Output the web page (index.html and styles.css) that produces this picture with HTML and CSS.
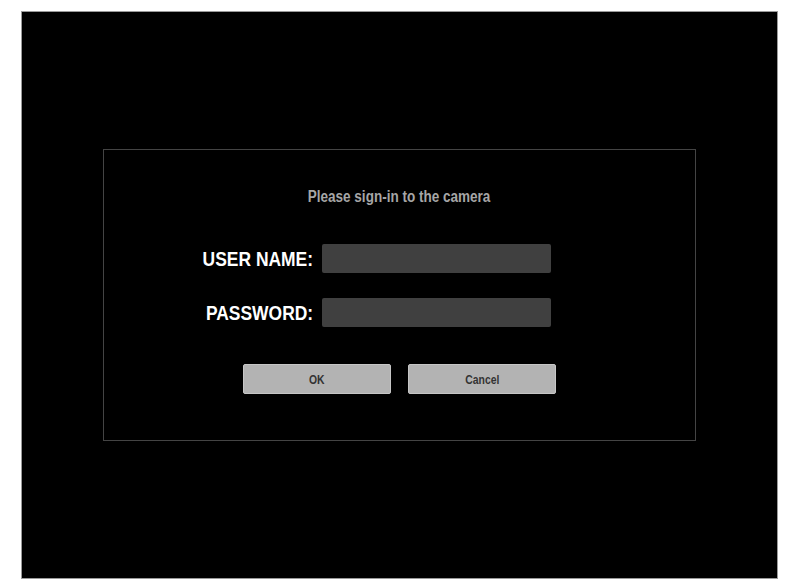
FILE: index.html
```html
<!DOCTYPE html>
<html>
<head>
<meta charset="utf-8">
<link rel="stylesheet" href="styles.css">
</head>
<body>
<div class="screen">
  <div class="panel">
    <div class="title"><span class="narrow">Please sign-in to the camera</span></div>
    <div class="form">
      <label class="label"><span class="narrow right">USER NAME:</span></label>
      <div class="input"></div>
      <label class="label"><span class="narrow right">PASSWORD:</span></label>
      <div class="input"></div>
    </div>
    <div class="buttons">
      <div class="btn"><span class="narrow">OK</span></div>
      <div class="btn"><span class="narrow">Cancel</span></div>
    </div>
  </div>
</div>
</body>
</html>
```
FILE: styles.css
```css
html, body { margin: 0; padding: 0; background: #fff; }
body {
  padding: 11px 9px 5px 21px;
  font-family: "Liberation Sans", Arial, sans-serif;
}
.screen {
  width: 674px;
  height: 429px;
  background: #000;
  border: 1px solid #9a9a9a;
  padding: 137px 0 0 81px;
}
.panel {
  width: 591px;
  height: 290px;
  border: 1px solid #444;
  display: flex;
  flex-direction: column;
  align-items: center;
}
.narrow {
  display: inline-block;
  transform: scaleX(0.83);
  transform-origin: center;
  white-space: nowrap;
}
.narrow.right { transform-origin: right center; }
.title {
  margin-top: 37px;
  color: #a6a6a6;
  font-weight: bold;
  font-size: 16px;
  line-height: 20px;
}
.title .narrow { transform: scaleX(0.845); }
.form {
  margin-top: 37px;
  align-self: flex-start;
  display: grid;
  grid-template-columns: 209px 229px;
  column-gap: 9px;
  row-gap: 25px;
  align-items: center;
}
.label {
  text-align: right;
  color: #fff;
  font-weight: bold;
  font-size: 21px;
  line-height: 29px;
}
.input {
  height: 29px;
  background: #404040;
  border-radius: 2px;
}
.buttons {
  margin-top: 37px;
  display: flex;
  gap: 17px;
}
.btn {
  width: 146px;
  height: 28px;
  background: #b3b3b3;
  border: 1px solid #c6c6c6;
  border-radius: 2px;
  color: #333;
  font-weight: bold;
  font-size: 13px;
  display: flex;
  align-items: center;
  justify-content: center;
}
.btn .narrow { transform: scaleX(0.8); }
```
